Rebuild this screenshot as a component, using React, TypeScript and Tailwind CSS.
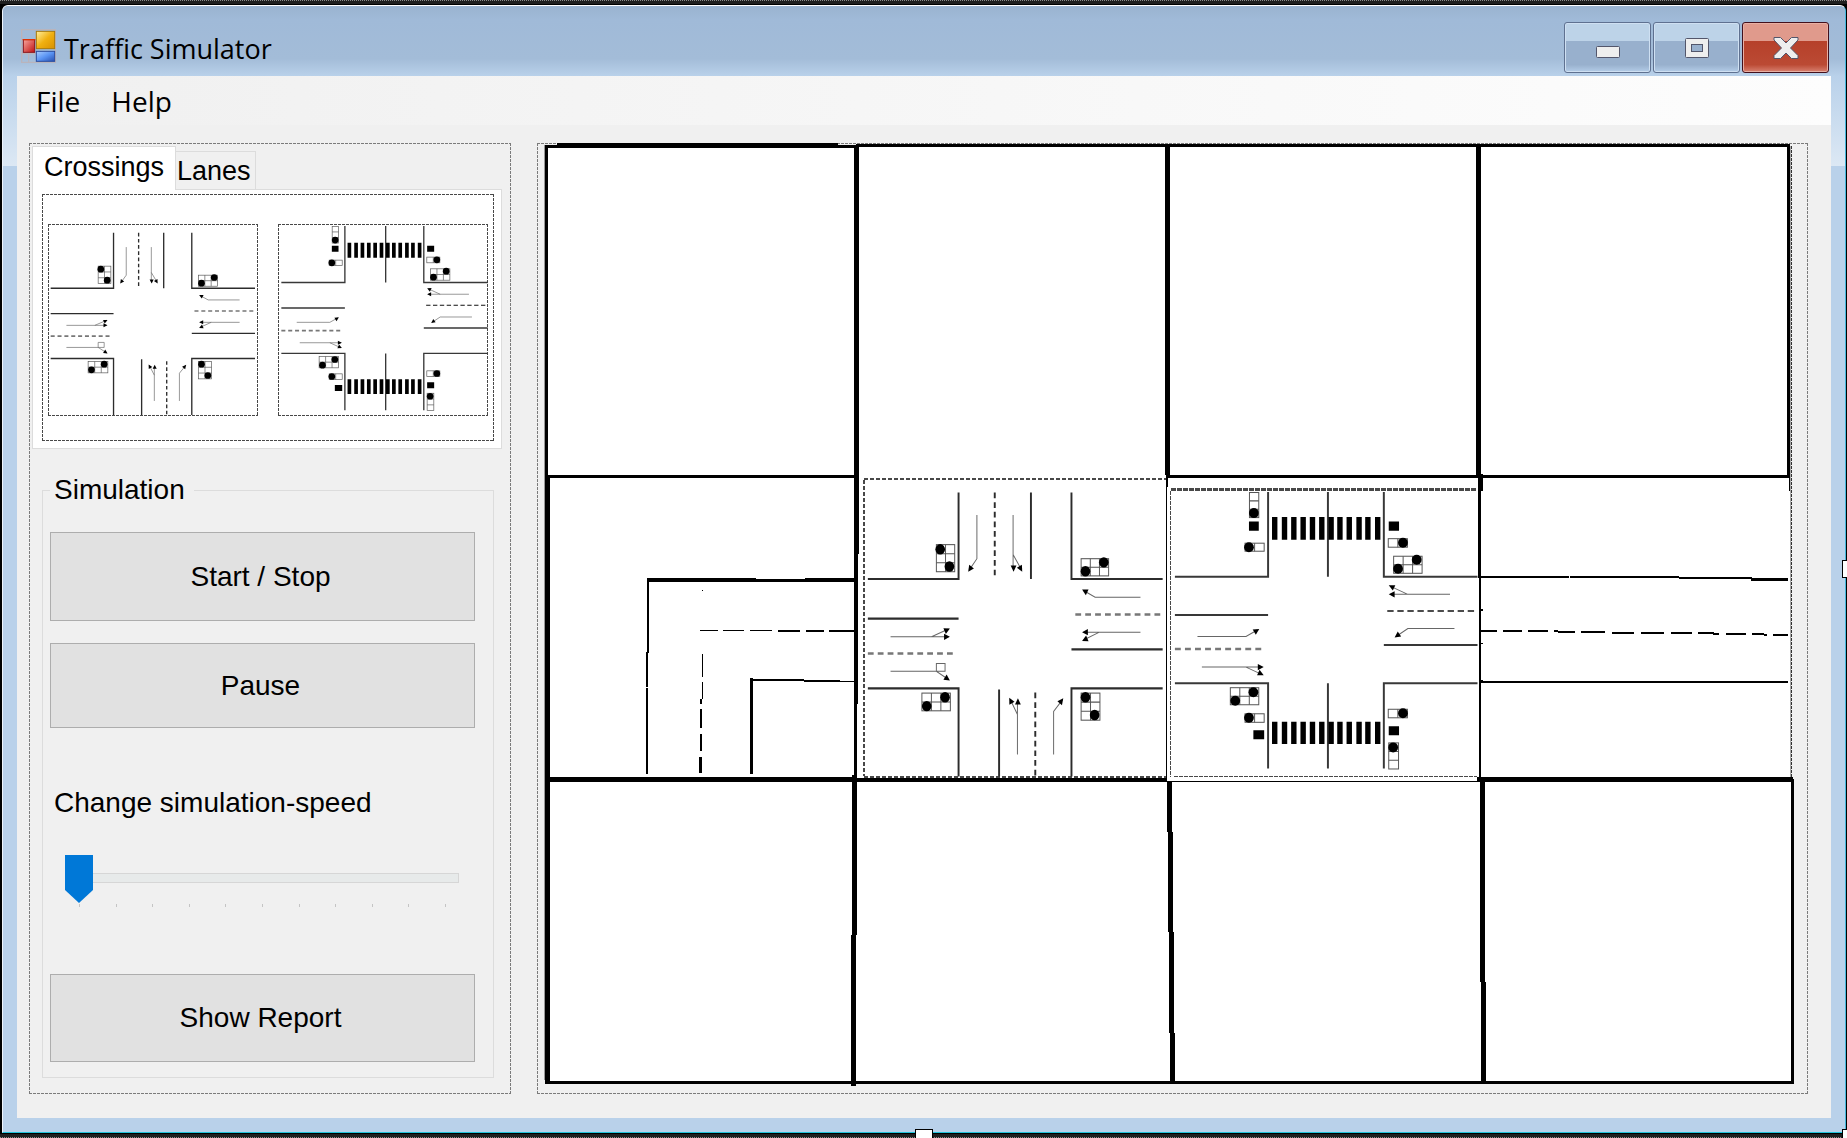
import { useState } from "react";

const PANEL_DASH =
  "[background:repeating-linear-gradient(90deg,#7b7b7b_0_3px,transparent_3px_4px)_0_0/100%_1px_no-repeat,repeating-linear-gradient(90deg,#7b7b7b_0_3px,transparent_3px_4px)_0_100%/100%_1px_no-repeat,repeating-linear-gradient(180deg,#7b7b7b_0_3px,transparent_3px_4px)_0_0/1px_100%_no-repeat,repeating-linear-gradient(180deg,#7b7b7b_0_3px,transparent_3px_4px)_100%_0/1px_100%_no-repeat]";
const DARK_DASH =
  "[background:repeating-linear-gradient(90deg,#484848_0_3px,transparent_3px_4px)_0_0/100%_1px_no-repeat,repeating-linear-gradient(90deg,#484848_0_3px,transparent_3px_4px)_0_100%/100%_1px_no-repeat,repeating-linear-gradient(180deg,#484848_0_3px,transparent_3px_4px)_0_0/1px_100%_no-repeat,repeating-linear-gradient(180deg,#484848_0_3px,transparent_3px_4px)_100%_0/1px_100%_no-repeat]";

type Point = [number, number];

function Head({ x, y, a }: { x: number; y: number; a: number }) {
  return <path d="M0 0L-12 -6V6Z" fill="#000" transform={`translate(${x} ${y}) rotate(${a})`} />;
}

function Light({
  x, y, w, h, cols, rows, on,
}: { x: number; y: number; w: number; h: number; cols: number; rows: number; on: Point[] }) {
  let d = "";
  for (let c = 1; c < cols; c++) d += `M${x + (w * c) / cols} ${y}v${h}`;
  for (let r = 1; r < rows; r++) d += `M${x} ${y + (h * r) / rows}h${w}`;
  return (
    <g>
      <rect x={x} y={y} width={w} height={h} fill="#fff" stroke="#555" strokeWidth="2" />
      <path d={d} stroke="#555" strokeWidth="2" fill="none" />
      {on.map(([cx, cy]) => (
        <circle key={`${cx}-${cy}`} cx={cx} cy={cy} r="10" fill="#000" />
      ))}
    </g>
  );
}

function PlainCrossing() {
  return (
    <g transform="translate(-85 -133)" fill="none">
      <g stroke="#2c2c2c" strokeWidth="4">
        <path d="M281 159V325H93M431 159V325M515 159V325H704M93 401H281M93 535H281V704M365 537V704M515 704V535H704M515 460H704" />
        <path d="M356 159V320M440 543V704" strokeDasharray="11 7.5" />
      </g>
      <path d="M93 468H275M523 393H704" stroke="#777" strokeWidth="5" strokeDasharray="12 8.5" />
      <path
        d="M319 202V286L303 308M394 202V305M394 278L410 305M658 360H564L540 347M658 427H540M573 427L540 442M140 436H260M225 436L260 421M140 502H235L260 518M235 487H253V502H235ZM403 662V560M403 585L388 556M478 662V579L497 556"
        stroke="#666"
        strokeWidth="2"
      />
      <Head x={301} y={311} a={125} />
      <Head x={395} y={311} a={90} />
      <Head x={413} y={311} a={60} />
      <Head x={537} y={345} a={208} />
      <Head x={537} y={427} a={180} />
      <Head x={537} y={444} a={155} />
      <Head x={263} y={436} a={0} />
      <Head x={263} y={420} a={-25} />
      <Head x={263} y={520} a={33} />
      <Head x={386} y={553} a={242} />
      <Head x={404} y={554} a={270} />
      <Head x={498} y={554} a={-52} />
      <Light x={235} y={259} w={38} h={52} cols={2} rows={3} on={[[243, 268], [262, 301]]} />
      <Light x={535} y={286} w={57} h={33} cols={3} rows={2} on={[[582, 293], [544, 310]]} />
      <Light x={205} y={544} w={59} h={34} cols={3} rows={2} on={[[253, 552], [215, 569]]} />
      <Light x={535} y={544} w={39} h={52} cols={2} rows={3} on={[[544, 552], [563, 586]]} />
    </g>
  );
}

const STRIPES = [263, 283, 302, 321, 340, 359, 378, 396, 415, 435, 453, 473];

function PedestrianCrossing() {
  return (
    <g transform="translate(-55 -133)" fill="none">
      <path
        d="M255 139V308H65M377 139V308M491 139V308H682M65 384H255M491 444H682M65 520H255V690M377 520V690M682 520H491V690"
        stroke="#383838"
        strokeWidth="4"
      />
      <path d="M65 452H248" stroke="#777" strokeWidth="5" strokeDasharray="12 8.5" />
      <path d="M498 376H682" stroke="#111" strokeWidth="3" strokeDasharray="13 7.5" />
      {STRIPES.map((x) => (
        <path key={x} d={`M${x} 189h11v45h-11zM${x} 597h11v44h-11z`} fill="#000" />
      ))}
      <path
        d="M626 343H505M540 343L507 328M635 411H540L516 427M111 427H210L233 414M120 488H243M210 488L243 503"
        stroke="#666"
        strokeWidth="2"
      />
      <Head x={501} y={343} a={180} />
      <Head x={501} y={325} a={205} />
      <Head x={513} y={429} a={145} />
      <Head x={237} y={412} a={-32} />
      <Head x={246} y={488} a={0} />
      <Head x={246} y={504} a={25} />
      <Light x={217} y={140} w={19} h={50} cols={1} rows={3} on={[[226, 181]]} />
      <Light x={208} y={241} w={39} h={16} cols={2} rows={1} on={[[216, 249]]} />
      <Light x={500} y={232} w={39} h={17} cols={2} rows={1} on={[[530, 240]]} />
      <Light x={511} y={267} w={58} h={34} cols={3} rows={2} on={[[558, 274], [520, 292]]} />
      <Light x={178} y={529} w={58} h={34} cols={3} rows={2} on={[[225, 538], [188, 555]]} />
      <Light x={208} y={581} w={39} h={17} cols={2} rows={1} on={[[216, 589]]} />
      <Light x={500} y={572} w={39} h={17} cols={2} rows={1} on={[[530, 580]]} />
      <Light x={501} y={639} w={20} h={52} cols={1} rows={3} on={[[510, 648]]} />
      <path d="M216 198h20v18h-20zM501 198h21v18h-21zM225 614h22v18h-22zM501 606h21v18h-21z" fill="#000" />
    </g>
  );
}

/* Filled bars of the board, each as [x, y, width, height]. */
const BARS: [number, number, number, number][] = [
  [545, 145, 3, 332], [545, 477, 5, 607],
  [557, 143, 281, 5], [545, 145, 311, 3], [856, 144, 934, 3],
  [545, 475, 310, 3], [1167, 475, 623, 3],
  [854, 145, 5, 409], [854, 554, 4, 150], [854, 704, 3, 74],
  [852, 775, 5, 160], [851, 935, 5, 151],
  [1165, 147, 5, 328], [1166, 474, 2, 13], [1166, 487, 1, 295],
  [1476, 147, 5, 330], [1478, 477, 3, 101], [1481, 474, 2, 17], [1479, 577, 2, 204],
  [1480, 781, 5, 201], [1481, 982, 5, 102],
  [1481, 609, 2, 2], [1481, 643, 2, 1], [1481, 680, 2, 2],
  [1787, 144, 3, 334], [1789, 478, 1, 13], [1791, 779, 3, 305],
  [545, 777, 311, 5], [854, 778, 313, 4], [1167, 781, 311, 1], [1477, 777, 316, 5],
  [545, 1081, 1249, 3],
  [647, 578, 109, 4], [756, 579, 49, 3], [805, 578, 49, 4],
  [647, 578, 2, 75], [646, 652, 2, 35], [646, 688, 2, 86], [702, 590, 1, 1],
  [700, 630, 18, 1], [723, 630, 21, 1], [750, 630, 22, 1],
  [778, 630, 22, 2], [806, 630, 18, 2], [829, 630, 25, 2],
  [702, 654, 1, 23], [702, 682, 1, 17], [700, 699, 2, 5], [700, 709, 2, 19],
  [700, 734, 2, 17], [699, 757, 3, 16],
  [750, 678, 3, 96], [753, 679, 51, 2], [769, 680, 71, 1], [804, 680, 36, 2], [840, 681, 14, 1],
  [1481, 576, 88, 2], [1570, 576, 109, 2], [1679, 577, 73, 2], [1751, 578, 37, 3],
  [1481, 630, 16, 2], [1503, 630, 19, 2], [1528, 630, 20, 2], [1554, 630, 4, 2],
  [1558, 631, 17, 2], [1581, 631, 24, 2],
  [1612, 632, 22, 2], [1641, 632, 23, 2], [1671, 632, 21, 2], [1698, 632, 16, 2],
  [1713, 633, 6, 2], [1726, 633, 20, 2], [1752, 633, 12, 2], [1764, 634, 3, 2], [1773, 634, 15, 2],
  [1481, 681, 307, 2],
];

function Board() {
  return (
    <svg viewBox="537 143 1271 951" className="block h-auto w-full" role="img" aria-label="Road grid">
      <path d="M545 145H1790V779H1793V1083H545Z" fill="#fff" />
      <g shapeRendering="crispEdges">
        <rect x="544" y="145" width="1" height="935" fill="#999" />
        <rect x="1790" y="146" width="1" height="633" fill="#aaa" />
        <path d="M1791.5 146V779" stroke="#333" strokeDasharray="3 1" />
        {BARS.map(([x, y, w, h], i) => (
          <rect key={i} x={x} y={y} width={w} height={h} fill="#000" />
        ))}
        <path d="M1167 781H1172L1175 1082H1170Z" fill="#000" />
        <g fill="none" stroke="#484848">
          <path d="M864 479H1166M864 776.5H1166" strokeWidth="2" strokeDasharray="4 2" />
          <path d="M864 480V776" strokeWidth="2" strokeDasharray="4 2" />
          <path d="M1171 489.500H1476" strokeWidth="3" strokeDasharray="5 1" />
          <path d="M1170.5 491V777M1174 776.5H1477" strokeDasharray="4 1" />
        </g>
      </g>
      <svg x="864" y="479" width="303" height="299" viewBox="0 0 628 574" preserveAspectRatio="none">
        <PlainCrossing />
      </svg>
      <svg x="1170" y="489" width="308" height="288" viewBox="0 0 628 574" preserveAspectRatio="none">
        <PedestrianCrossing />
      </svg>
    </svg>
  );
}

function AppIcon() {
  return (
    <svg viewBox="0 0 105 102" className="h-[34px] w-[35px]" aria-hidden="true">
      <defs>
        <linearGradient id="gy" x1="0" y1="0" x2="1" y2="1">
          <stop offset="0" stopColor="#fff0a0" />
          <stop offset=".5" stopColor="#f0b010" />
          <stop offset="1" stopColor="#d89000" />
        </linearGradient>
        <linearGradient id="gr" x1="0" y1="0" x2="1" y2="1">
          <stop offset="0" stopColor="#f8a8a0" />
          <stop offset="1" stopColor="#c01010" />
        </linearGradient>
        <linearGradient id="gb" x1="0" y1="0" x2="1" y2="1">
          <stop offset="0" stopColor="#a8ccff" />
          <stop offset=".5" stopColor="#5a94f4" />
          <stop offset="1" stopColor="#2850b0" />
        </linearGradient>
      </defs>
      <path d="M2 2H103V100H2ZM23 74V100M2 74H44" fill="none" stroke="#b9b4bc" strokeWidth="4" />
      <rect x="46" y="7" width="55" height="52" fill="url(#gy)" stroke="#a87808" strokeWidth="3" />
      <rect x="7" y="32" width="34" height="38" fill="url(#gr)" stroke="#8c1418" strokeWidth="3" />
      <path d="M5 32H43" stroke="#e03000" strokeWidth="4" />
      <rect x="46" y="67" width="55" height="30" fill="url(#gb)" stroke="#2c4c9c" strokeWidth="3" />
    </svg>
  );
}

const CAPTION =
  "flex h-[51px] w-[87px] items-center justify-center rounded-[3px] border border-[#5f7190] bg-[linear-gradient(#bdd3e8_0_36%,#98b0cd_37%,#98b0cd_85%,#b4cde8)] shadow-[inset_0_0_0_1px_#cfe0f2]";
const CLOSE =
  "flex h-[51px] w-[87px] items-center justify-center rounded-[3px] border border-[#43101c] bg-[linear-gradient(#e09a8c_0_36%,#b6402a_37%,#bb4a34_85%,#d88070)] shadow-[inset_0_0_0_1px_#e8b0a4]";

function TitleBar() {
  return (
    <header className="flex h-[70px] items-start justify-between bg-[linear-gradient(#9ab3d0,#a0bad8_20%,#a3bcd8_75%,#b9d1ea)] pt-4 pr-4 pl-[18px]">
      <div className="flex items-start gap-2 pt-[7px]">
        <AppIcon />
        <h1 className="pt-[2px] font-['Open_Sans',sans-serif] text-[27px] leading-9 whitespace-nowrap text-black">
          Traffic Simulator
        </h1>
      </div>
      <div className="flex gap-[2px]">
        <button type="button" aria-label="Minimize" className={CAPTION}>
          <svg viewBox="0 0 24 20" className="h-5 w-6" aria-hidden="true">
            <rect x=".5" y="8.500" width="23" height="11" rx="1" fill="#eee" stroke="#53566b" />
          </svg>
        </button>
        <button type="button" aria-label="Maximize" className={CAPTION}>
          <svg viewBox="0 0 24 20" className="h-5 w-6" aria-hidden="true">
            <rect x=".5" y=".5" width="23" height="19" rx="1" fill="#eee" stroke="#53566b" />
            <rect x="6.500" y="6.500" width="11" height="7" fill="#98b0cd" stroke="#53566b" />
          </svg>
        </button>
        <button type="button" aria-label="Close" className={CLOSE}>
          <svg viewBox="0 0 26 22" className="h-[22px] w-[26px]" aria-hidden="true">
            <path
              d="M1 .5H7.500L13 6L18.500 .5H25V3L17.500 11L25 18.500V21.500H18.500L13 16L7.500 21.500H1V18.500L8.500 11L1 3Z"
              fill="#eee"
              stroke="#53566b"
            />
          </svg>
        </button>
      </div>
    </header>
  );
}

const BUTTON = "block w-full border border-[#adadad] bg-[#e1e1e1] pr-1 text-[28px] leading-8 text-black";

function Simulation() {
  const [speed, setSpeed] = useState(0);
  return (
    <fieldset className="mt-6 mr-2 ml-[10px] border border-[#dcdcdc] pr-[18px] pb-[15px] pl-[7px]">
      <legend className="pr-[9px] pl-1 text-[28px] leading-[34px]">Simulation</legend>
      <button type="button" className={`${BUTTON} mt-[25px] h-[89px]`}>Start / Stop</button>
      <button type="button" className={`${BUTTON} mt-[22px] h-[85px]`}>Pause</button>
      <label htmlFor="speed" className="mt-[58px] block pl-1 text-[28px] leading-[34px]">
        Change simulation-speed
      </label>
      <div className="mt-[34px] mr-4 ml-[15px]">
        <input
          id="speed"
          type="range"
          min={0}
          max={10}
          value={speed}
          onChange={(e) => setSpeed(Number(e.target.value))}
          className="block h-12 w-full appearance-none bg-transparent [&::-webkit-slider-runnable-track]:h-[10px] [&::-webkit-slider-runnable-track]:border [&::-webkit-slider-runnable-track]:border-[#d6d6d6] [&::-webkit-slider-runnable-track]:bg-[#e7eaea] [&::-webkit-slider-thumb]:-mt-[19px] [&::-webkit-slider-thumb]:-ml-px [&::-webkit-slider-thumb]:h-12 [&::-webkit-slider-thumb]:w-7 [&::-webkit-slider-thumb]:appearance-none [&::-webkit-slider-thumb]:bg-[#0078d7] [&::-webkit-slider-thumb]:[clip-path:polygon(0_0,100%_0,100%_73%,50%_100%,0_73%)]"
        />
        <div className="mt-[2px] flex justify-between pr-[13px] pl-[14px]">
          {Array.from({ length: 11 }, (_, i) => (
            <span key={i} className="h-[3px] w-px bg-[#c4c4c4]" />
          ))}
        </div>
      </div>
      <button type="button" className={`${BUTTON} mt-[67px] h-[88px]`}>Show Report</button>
    </fieldset>
  );
}

function Sidebar() {
  return (
    <aside className={`w-[482px] shrink-0 pt-[3px] pr-[9px] pb-4 pl-[3px] ${PANEL_DASH}`}>
      <div role="tablist" className="flex h-11 items-end text-[27px] leading-8">
        <button
          type="button"
          role="tab"
          aria-selected="true"
          className="z-10 h-11 border border-b-0 border-[#dcdcdc] bg-white px-[11px] pb-[3px]"
        >
          Crossings
        </button>
        <button
          type="button"
          role="tab"
          aria-selected="false"
          className="h-[39px] border border-l-0 border-[#dcdcdc] bg-[#f0f0f0] pr-1 pl-px"
        >
          Lanes
        </button>
      </div>
      <div role="tabpanel" className="-mt-px border border-[#dcdcdc] bg-white pt-1 pr-[7px] pb-[7px] pl-[9px]">
        <div className={`flex gap-5 pt-[30px] pr-[6px] pb-[25px] pl-[6px] ${DARK_DASH}`}>
          <button type="button" aria-label="Crossing" className={`h-[192px] flex-1 ${DARK_DASH}`}>
            <svg viewBox="0 0 628 574" preserveAspectRatio="none" className="block h-full w-full">
              <PlainCrossing />
            </svg>
          </button>
          <button type="button" aria-label="Pedestrian crossing" className={`h-[192px] flex-1 ${DARK_DASH}`}>
            <svg viewBox="0 0 628 574" preserveAspectRatio="none" className="block h-full w-full">
              <PedestrianCrossing />
            </svg>
          </button>
        </div>
      </div>
      <Simulation />
    </aside>
  );
}

export default function App() {
  return (
    <div className="relative flex min-h-screen flex-col bg-black pt-[5px] pr-px pb-[5px] pl-[2px] font-['Liberation_Sans',Arial,sans-serif] text-black [background-image:linear-gradient(#1f1f1f,#1f1f1f),linear-gradient(#1f1f1f,#1f1f1f)] [background-position:top,bottom] [background-repeat:no-repeat] [background-size:100%_4px,100%_4px]">
      <div className="absolute inset-x-0 top-0 border-t border-dotted border-[#8a8a8a]" />
      <div className="absolute inset-x-0 bottom-0 border-t border-dotted border-[#8a8a8a]" />
      <div className="flex flex-1 flex-col overflow-hidden rounded-t-md border-t border-r border-b border-l border-t-white border-r-[#45b8dc] border-b-[#22c4dc] border-l-[#eef4fb] bg-[#b9d1ea]">
        <TitleBar />
        <div className="flex flex-1 flex-col bg-[linear-gradient(#b9d1ea,#dce8f4)] bg-[length:100%_90px] bg-no-repeat px-[14px] pb-[14px]">
          <div className="flex flex-1 flex-col bg-[#f0f0f0]">
            <nav className="flex h-[49px] items-center gap-[31px] bg-gradient-to-r from-[#f0f0f0] to-[#fdfdfd] pt-px pl-[19px] font-['Open_Sans',sans-serif] text-[28px] leading-9">
              <button type="button">File</button>
              <button type="button">Help</button>
            </nav>
            <main className="flex flex-1 items-start gap-[26px] pt-[18px] pr-[23px] pb-6 pl-3">
              <div className="flex self-stretch">
                <Sidebar />
              </div>
              <section className={`min-w-0 flex-1 ${PANEL_DASH}`}>
                <Board />
              </section>
            </main>
          </div>
        </div>
      </div>
      <div className="absolute bottom-0 left-1/2 h-[9px] w-[18px] -translate-x-1/2 border border-b-0 border-black bg-white" />
      <div className="absolute top-1/2 right-0 h-[18px] w-[5px] -translate-y-1/2 border border-r-0 border-black bg-white" />
      <div className="absolute right-0 bottom-0 h-[9px] w-[5px] border-t border-l border-black bg-white" />
    </div>
  );
}
